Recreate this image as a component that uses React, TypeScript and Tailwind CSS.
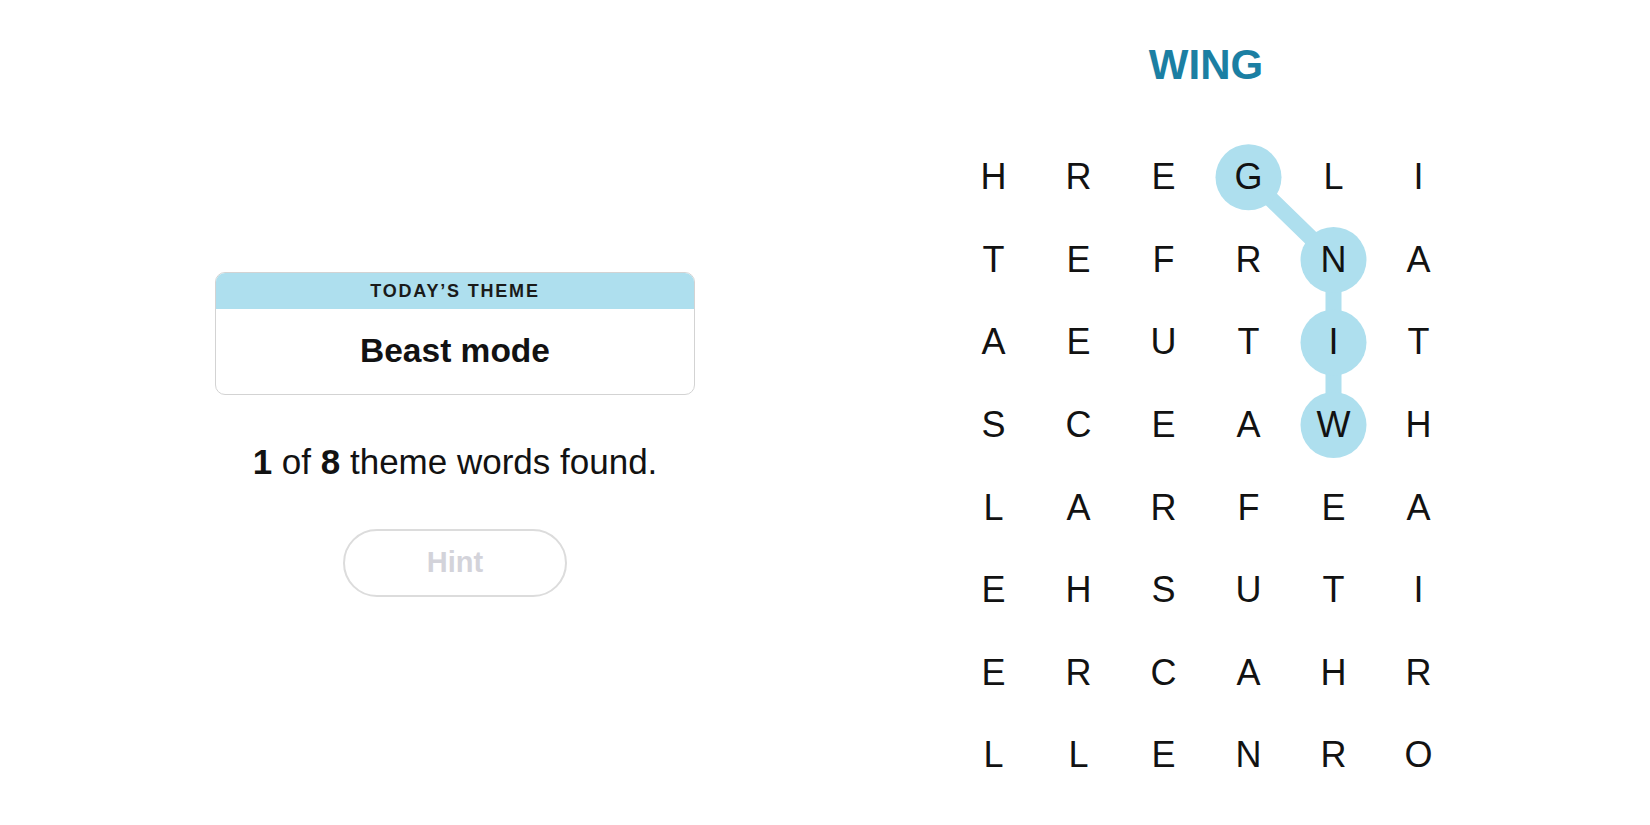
import React from 'react';

const rows = [
  'HREGLI',
  'TEFRNA',
  'AEUTIT',
  'SCEAWH',
  'LARFEA',
  'EHSUTI',
  'ERCAHR',
  'LLENRO',
];

const CELL_W = 85;
const CELL_H = 82.6;

// current selection, in order
const path: [number, number][] = [
  [0, 3],
  [1, 4],
  [2, 4],
  [3, 4],
];

function ThemeCard() {
  return (
    <div className="w-[480px] overflow-hidden rounded-[10px] border border-[#d3d3d3] bg-white">
      <div className="flex h-[36px] items-center justify-center bg-[#aedfee]">
        <span className="text-[18px] font-bold tracking-[1.8px] text-[#1a1a1a]">TODAY’S THEME</span>
      </div>
      <div className="flex h-[85px] items-center justify-center pb-[2px]">
        <span className="text-[33.5px] font-bold leading-none text-[#121212]">Beast mode</span>
      </div>
    </div>
  );
}

function Board() {
  const centers = path.map(([r, c]) => [CELL_W / 2 + c * CELL_W, CELL_H / 2 + r * CELL_H]);
  const points = centers.map(([x, y]) => `${x},${y}`).join(' ');

  return (
    <div className="relative w-[510px]">
      <svg
        className="pointer-events-none absolute left-0 top-0"
        width={510}
        height={CELL_H * 8}
      >
        <polyline
          points={points}
          fill="none"
          stroke="#aedfee"
          strokeWidth={16}
          strokeLinejoin="round"
          strokeLinecap="round"
        />
        {centers.map(([x, y], i) => (
          <circle key={i} cx={x} cy={y} r={33} fill="#aedfee" />
        ))}
      </svg>
      <div className="relative grid grid-cols-[repeat(6,85px)] grid-rows-[repeat(8,82.6px)]">
        {rows.map((row, r) =>
          row.split('').map((ch, c) => (
            <div
              key={`${r}-${c}`}
              className="flex items-center justify-center text-[36px] leading-none text-[#121212]"
            >
              {ch}
            </div>
          ))
        )}
      </div>
    </div>
  );
}

export default function App() {
  return (
    <div
      className="flex h-[825px] w-full bg-white"
      style={{ fontFamily: '"Liberation Sans", Arial, sans-serif' }}
    >
      <div className="flex w-[910px] flex-col items-center pt-[272px]">
        <ThemeCard />
        <p className="mt-[49px] text-[35px] leading-none text-[#121212]">
          <b>1</b> of <b>8</b> theme words found.
        </p>
        <button
          type="button"
          disabled
          className="mt-[50px] flex h-[68px] w-[224px] items-center justify-center rounded-full border-2 border-[#dcdcdc] bg-white text-[29px] font-bold text-[#d3d3da]"
        >
          Hint
        </button>
      </div>
      <div className="flex w-[592px] flex-col items-center">
        <h1 className="mt-[44px] text-[42px] font-bold leading-[42px] text-[#1b7fa3]">WING</h1>
        <div className="mt-[50px]">
          <Board />
        </div>
      </div>
    </div>
  );
}
